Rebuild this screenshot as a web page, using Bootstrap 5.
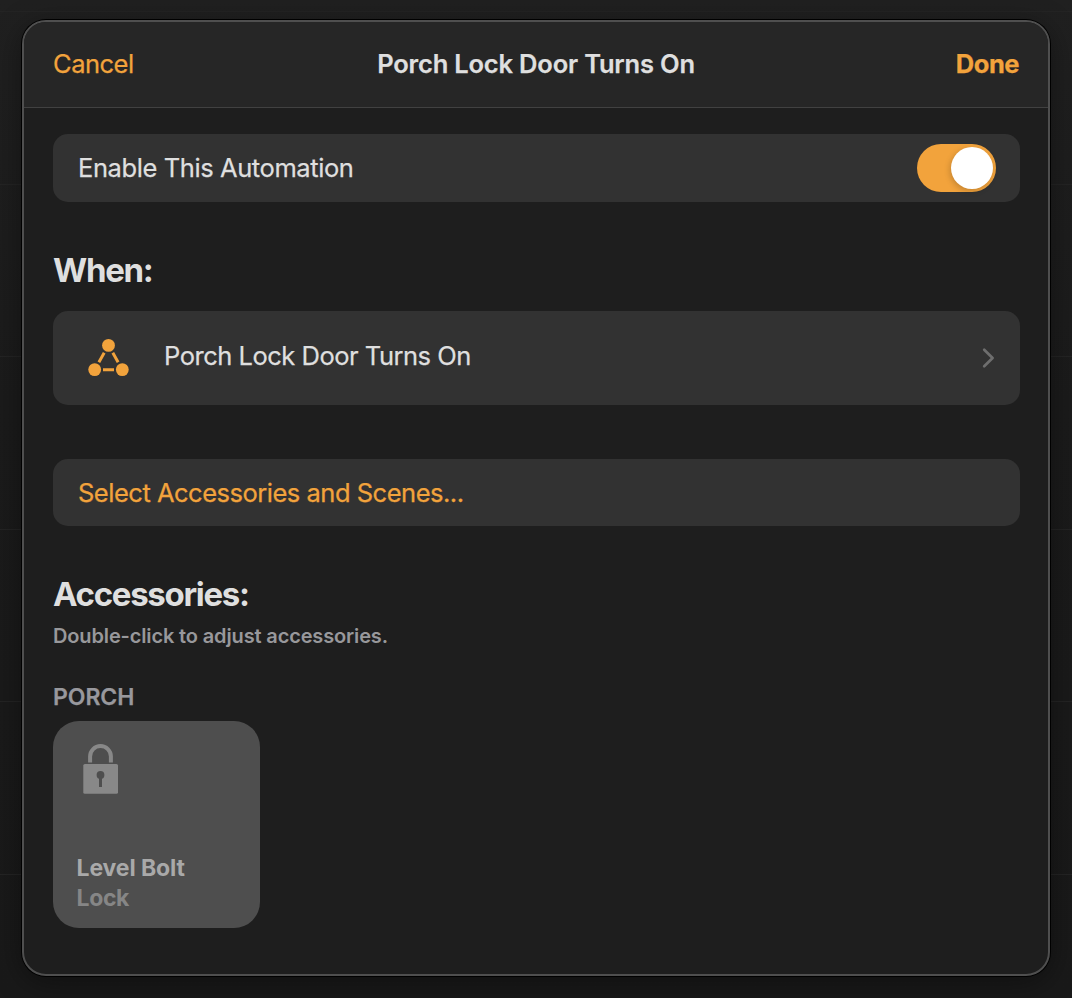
<!DOCTYPE html>
<html lang="en" data-bs-theme="dark">
<head>
<meta charset="utf-8">
<meta name="viewport" content="width=device-width, initial-scale=1">
<title>Porch Lock Door Turns On</title>
<link href="https://cdn.jsdelivr.net/npm/bootstrap@5.3.0/dist/css/bootstrap.min.css" rel="stylesheet">
<style>
  :root { --accent: #f2a33c; --row: #323232; --ink: #dfdfdf; }
  body {
    height: 998px; padding: 20px 22px 22px; overflow: hidden;
    font-family: Inter, "Liberation Sans", sans-serif; font-size: 25.5px; line-height: 32px;
    letter-spacing: -.49px; color: var(--ink); -webkit-text-stroke: .25px;
    background: repeating-linear-gradient(#0000 0 11px, #242424 11px 12px, #0000 12px 172.6px), linear-gradient(#202020, #1b1b1b 40%, #191919);
  }
  .sheet { height: 956px; border: 2px solid #4f4f4f; border-radius: 24px; background: #1e1e1e; box-shadow: 0 0 0 1px #000, 0 6px 30px #0006; overflow: hidden; }
  .sheet-head { height: 86px; padding: 0 29px 1px; background: #262626; border-bottom: 1px solid #414141; }
  .sheet-head > * { flex: 1 1 0; white-space: nowrap; }
  .sheet-title { flex: 0 0 auto; font-weight: 600; letter-spacing: -.19px; }
  .sheet-body { padding: 26px 28px 0 29px; }
  .accent, .accent:hover { color: var(--accent); }
  .sheet-row { background: var(--row); border-radius: 15px; padding: 0 25px; }
  .row-sm { height: 68px; }
  .row-lg { height: 93.5px; padding-left: 34px; }
  .gap-icon { gap: 34px; }
  .row-lg .label { padding-bottom: 3px; }
  .enable-label { letter-spacing: -.41px; }
  .switch { width: 79px; height: 48px; border-radius: 24px; background: var(--accent); padding: 3px; margin-right: -.5px; }
  .knob { width: 42px; height: 42px; border-radius: 50%; background: #fff; box-shadow: -1px 2px 6px #0003; }
  h2 { font-size: 33px; line-height: 40px; font-weight: 700; letter-spacing: -1.3px; color: var(--ink); margin: 0; -webkit-text-stroke: 0; }
  .when { margin: 48px 0 21px; }
  .select-row { height: 67px; margin-top: 54.5px; }
  .acc { margin-top: 48px; }
  .hint { margin-top: 9px; font-size: 20px; line-height: 26px; font-weight: 600; letter-spacing: -.14px; color: #98989b; -webkit-text-stroke: 0; }
  .room { margin: 34px 0 10px; font-size: 23px; line-height: 28px; font-weight: 600; letter-spacing: -.05px; color: #98989d; }
  .tile { width: 207px; height: 207px; border-radius: 26px; background: #4e4e4e; padding: 22px 23.5px 15px; font-size: 23px; line-height: 29.5px; font-weight: 700; letter-spacing: -.1px; color: #a9a9a9; -webkit-text-stroke: 0; }
  .tile .state { color: #868686; letter-spacing: -.35px; }
  .tile svg { margin-left: 6px; }
</style>
</head>
<body>
<main class="sheet">
  <header class="sheet-head d-flex align-items-center">
    <a class="accent text-decoration-none" href="#">Cancel</a>
    <span class="sheet-title">Porch Lock Door Turns On</span>
    <a class="accent text-decoration-none fw-bold text-end" href="#">Done</a>
  </header>
  <div class="sheet-body">
    <div class="sheet-row row-sm d-flex align-items-center justify-content-between">
      <span class="enable-label">Enable This Automation</span>
      <span class="switch d-flex justify-content-end" role="switch" aria-checked="true"><span class="knob"></span></span>
    </div>
    <h2 class="when">When:</h2>
    <div class="sheet-row row-lg d-flex align-items-center gap-icon">
      <svg width="43" height="42" viewBox="87 337 43 42" fill="#f2a33c" stroke="#f2a33c" aria-hidden="true">
        <g stroke="none"><circle cx="108.5" cy="345.4" r="6.4"/><circle cx="94.7" cy="369.6" r="6.4"/><circle cx="122.3" cy="369.6" r="6.4"/></g>
        <path d="M104.2 352.8 98.9 362.2M112.8 352.8l5.3 9.4M103 369.7h11" stroke-width="3"/>
      </svg>
      <span class="label flex-grow-1">Porch Lock Door Turns On</span>
      <svg width="13" height="22" viewBox="982 347.5 13 22" fill="none" stroke="#6e6e6e" stroke-width="2.7" stroke-linecap="round" stroke-linejoin="round" aria-hidden="true"><path d="m984.2 350.3 8.4 8.2-8.4 8.2"/></svg>
    </div>
    <a class="sheet-row row-sm select-row d-flex align-items-center accent text-decoration-none" href="#">Select Accessories and Scenes...</a>
    <h2 class="acc">Accessories:</h2>
    <div class="hint">Double-click to adjust accessories.</div>
    <div class="room">PORCH</div>
    <div class="tile d-flex flex-column">
      <svg width="36" height="52" viewBox="83 743 36 52" aria-hidden="true">
        <path d="M90.1 762.6V756.4a10.4 10.4 0 0 1 20.8 0v6.2" fill="none" stroke="#888" stroke-width="4"/>
        <rect x="83.3" y="764" width="34.7" height="29.8" rx="1.6" fill="#888"/>
        <circle cx="100.5" cy="775" r="3.9" fill="#4e4e4e"/><path d="M99 775h3v12h-3z" fill="#4e4e4e"/>
      </svg>
      <span class="mt-auto">Level Bolt</span>
      <span class="state">Lock</span>
    </div>
  </div>
</main>
<script src="https://cdn.jsdelivr.net/npm/bootstrap@5.3.0/dist/js/bootstrap.bundle.min.js"></script>
</body>
</html>
